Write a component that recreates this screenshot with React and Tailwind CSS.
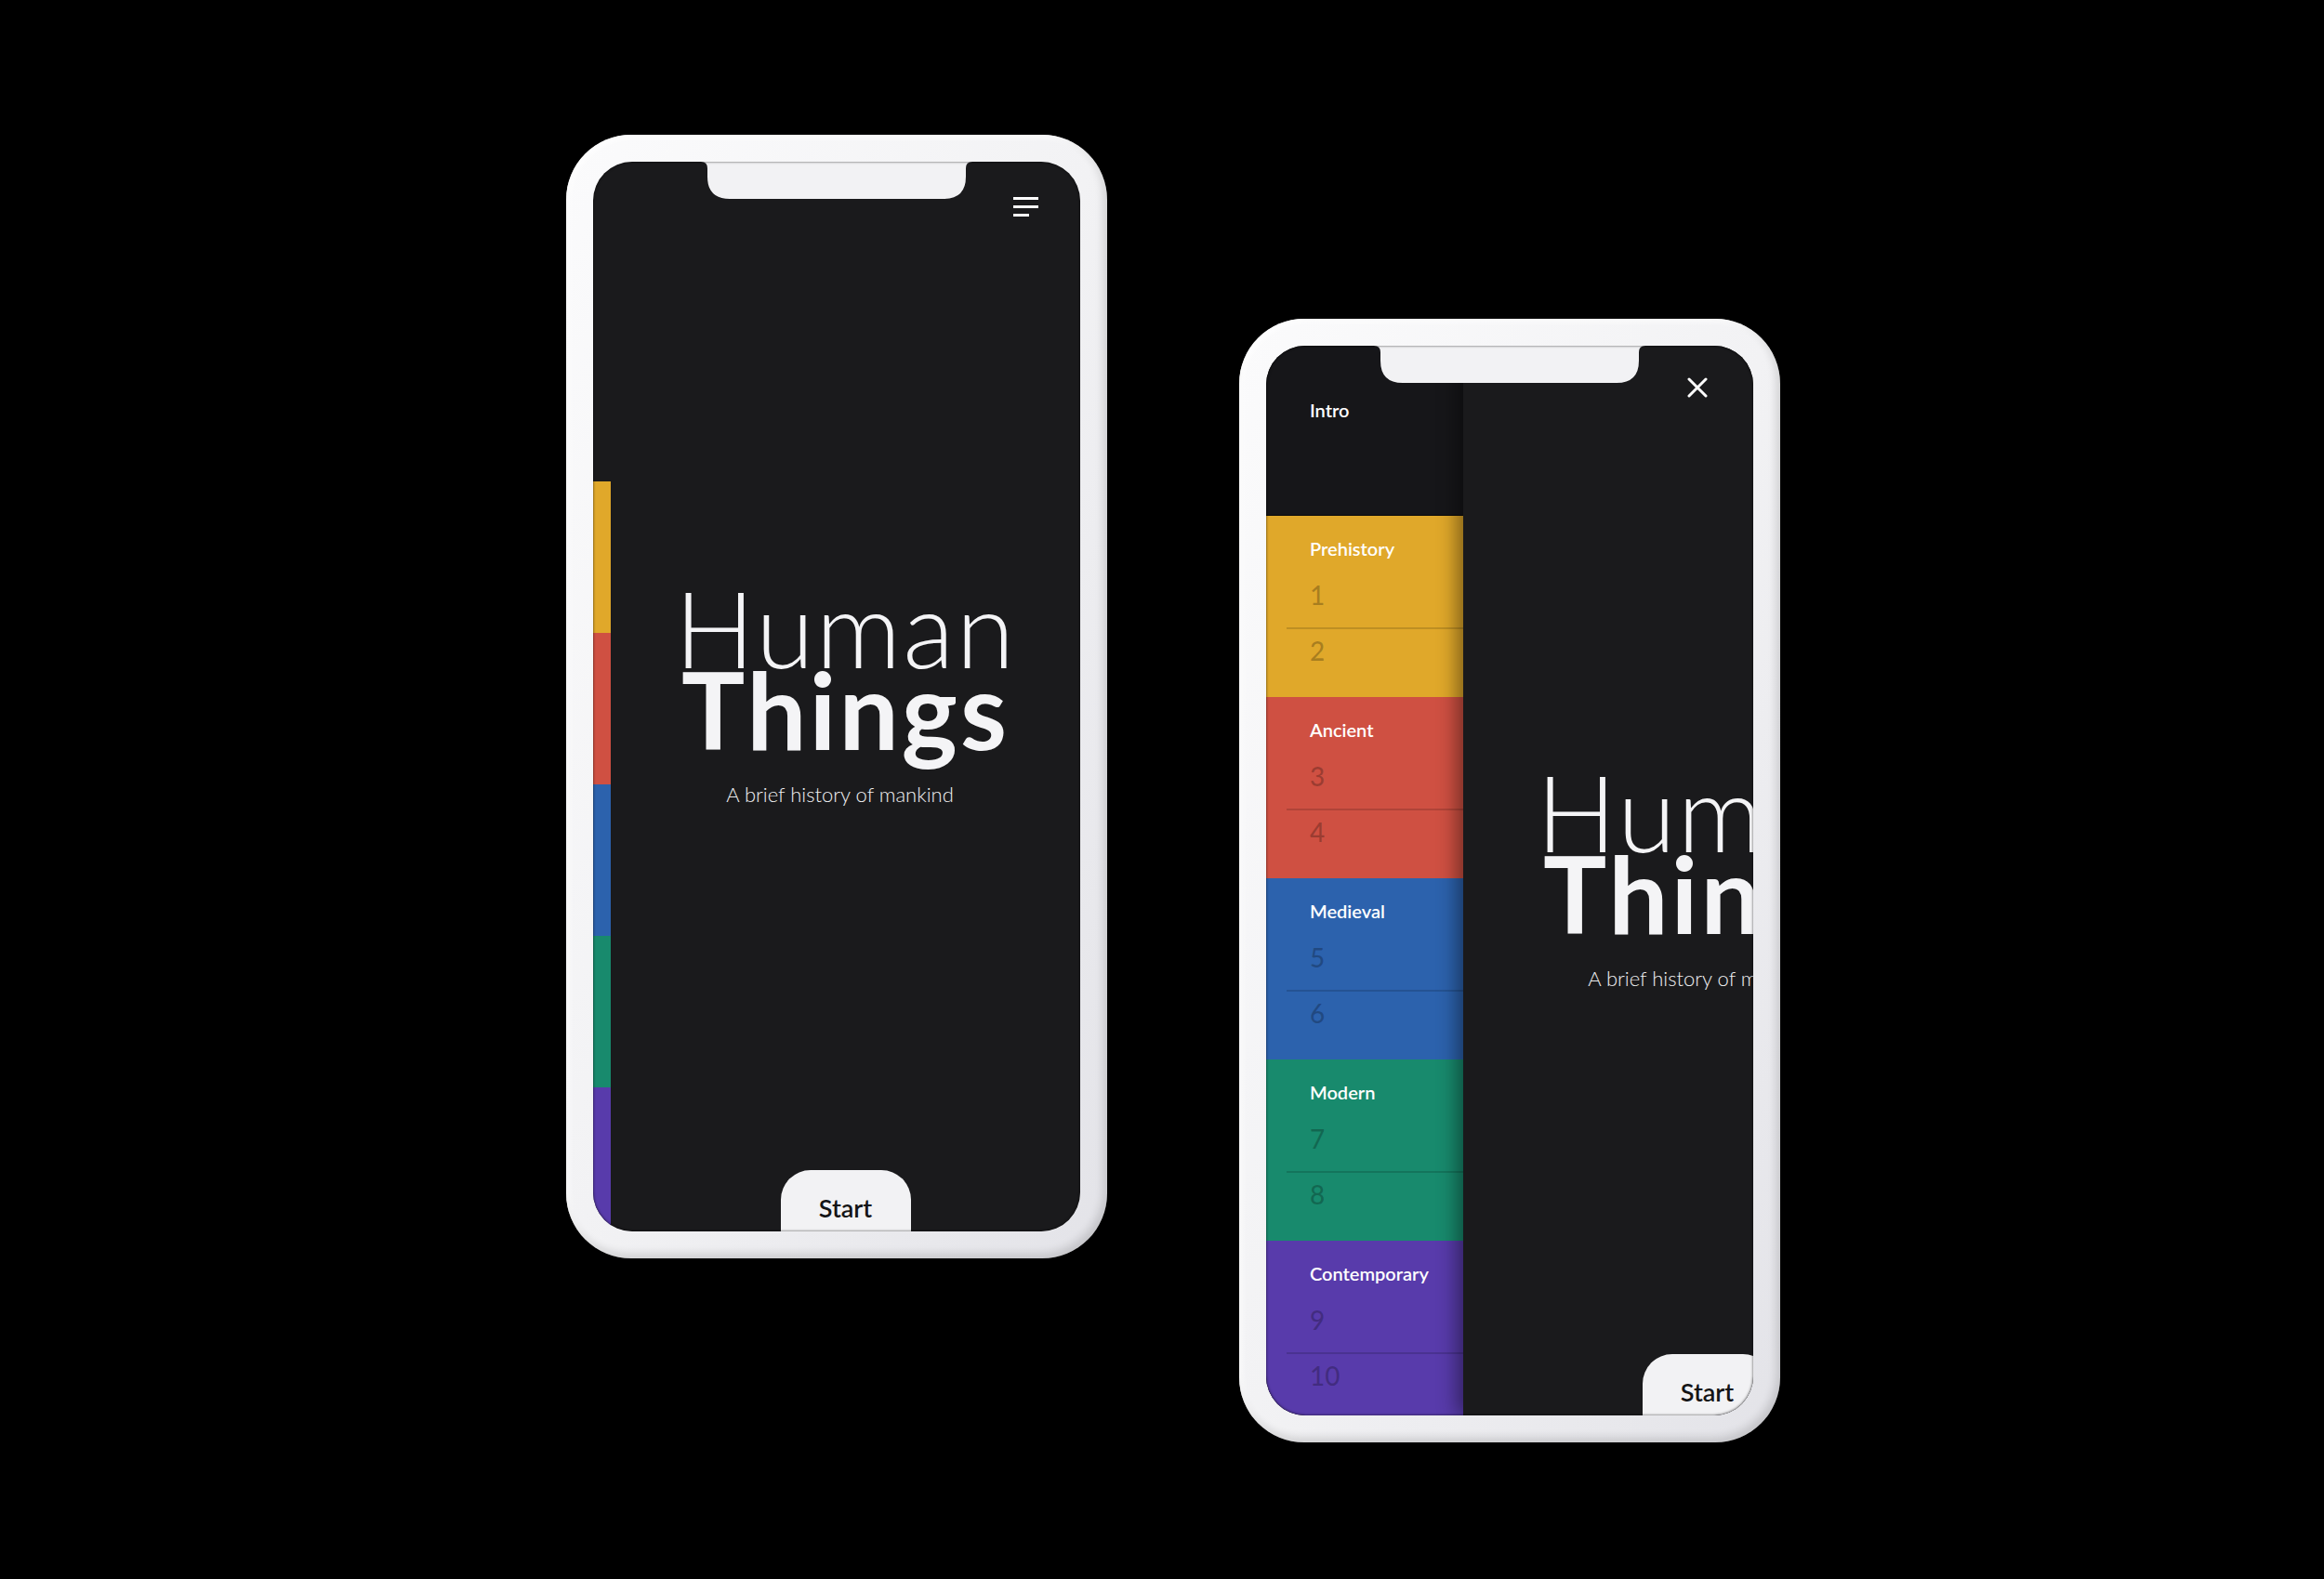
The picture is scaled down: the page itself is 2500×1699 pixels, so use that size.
import React from "react";

const eras = [
  { name: "Prehistory", color: "bg-[#e0a82a]", chapters: [1, 2] },
  { name: "Ancient", color: "bg-[#cf5042]", chapters: [3, 4] },
  { name: "Medieval", color: "bg-[#2c62ad]", chapters: [5, 6] },
  { name: "Modern", color: "bg-[#188a6d]", chapters: [7, 8] },
  { name: "Contemporary", color: "bg-[#583bab]", chapters: [9, 10] },
];

// notch cut-out at the top of the screen
const Notch = () => (
  <svg
    className="pointer-events-none absolute left-[116px] top-0 z-20"
    width="292"
    height="40"
    viewBox="0 0 292 40"
  >
    <path
      d="M0 0 H292 Q285 0 285 7 V16 Q285 40 261 40 H31 Q7 40 7 16 V7 Q7 0 0 0 Z"
      fill="#f2f2f4"
    />
  </svg>
);

const Phone = ({ className, children }) => (
  <div
    className={`relative h-[1209px] w-[582px] shrink-0 rounded-[70px] bg-gradient-to-br from-[#fbfbfc] via-[#f2f2f4] to-[#e3e3e8] p-[29px] shadow-[inset_-4px_-5px_10px_rgba(0,0,0,0.14),inset_3px_3px_6px_rgba(255,255,255,0.9)] ${className}`}
  >
    <div className="relative h-full w-full overflow-hidden rounded-[42px] bg-[#1a1a1c]">
      {children}
      <Notch />
      <div className="pointer-events-none absolute inset-0 z-30 rounded-[42px] shadow-[inset_0_0_3px_rgba(0,0,0,0.7)]" />
    </div>
  </div>
);

// title + subtitle + start tab, centred in whatever column it gets
const HomeContent = () => (
  <div className="flex h-full w-[505px] shrink-0 flex-col items-center pt-[66px]">
    <div className="flex flex-1 flex-col items-center justify-center text-[#f4f4f6]">
      <h1 className="text-[114px] font-light leading-[88px] tracking-[2px]">Human</h1>
      <h2 className="text-[114px] font-bold leading-[88px] tracking-[3px]">Things</h2>
      <p className="mt-[34px] pr-[12px] text-[22px] font-light leading-[28px] text-[#f0f0f2]">
        A brief history of mankind
      </p>
    </div>
    <button className="h-[66px] w-[140px] shrink-0 rounded-t-[32px] bg-[#f2f2f4] pt-[16px] text-[27px] font-semibold leading-[32px] text-[#141416]">
      Start
    </button>
  </div>
);

const Hamburger = () => (
  <div className="absolute right-[45px] top-[38px] z-10 flex w-[27px] flex-col gap-[6px]">
    <span className="h-[3px] w-[27px] bg-white" />
    <span className="h-[3px] w-[27px] bg-white" />
    <span className="h-[3px] w-[17px] bg-white" />
  </div>
);

const CloseIcon = () => (
  <svg
    className="absolute right-[49px] top-[34px] z-10"
    width="22"
    height="22"
    viewBox="0 0 22 22"
    fill="none"
    stroke="white"
    strokeWidth="3"
    strokeLinecap="round"
  >
    <path d="M2 2 L20 20 M20 2 L2 20" />
  </svg>
);

const HomeScreen = () => (
  <div className="flex h-full">
    <div className="flex w-[19px] shrink-0 flex-col pt-[344px]">
      <div className="h-[163px] bg-[#e0a82a]" />
      <div className="h-[163px] bg-[#cf5042]" />
      <div className="h-[163px] bg-[#2c62ad]" />
      <div className="h-[163px] bg-[#188a6d]" />
      <div className="flex-1 bg-[#583bab]" />
    </div>
    <HomeContent />
    <Hamburger />
  </div>
);

const EraSection = ({ era }) => (
  <div className={`flex h-[195px] shrink-0 flex-col pt-[23px] ${era.color}`}>
    <div className="pl-[47px] text-[20px] font-semibold leading-[24px] text-white">{era.name}</div>
    <div className="mt-[22px] pl-[47px] text-[28px] font-medium leading-[32px] text-black/25">
      {era.chapters[0]}
    </div>
    <div className="ml-[22px] mt-[19px] h-[2px] bg-black/15" />
    <div className="mt-[7px] pl-[47px] text-[28px] font-medium leading-[32px] text-black/25">
      {era.chapters[1]}
    </div>
  </div>
);

const MenuScreen = () => (
  <div className="flex h-full">
    <div className="flex w-[212px] shrink-0 flex-col bg-[#161619]">
      <div className="h-[183px] shrink-0 border-b border-black/60 pl-[47px] pt-[57px] text-[20px] font-semibold leading-[24px] text-white">
        Intro
      </div>
      {eras.map((era) => (
        <EraSection key={era.name} era={era} />
      ))}
    </div>
    <div className="relative z-10 flex h-full w-[515px] shrink-0 bg-[#1a1a1c] pl-[10px] shadow-[-6px_0_20px_rgba(0,0,0,0.45)]">
      <HomeContent />
    </div>
    <CloseIcon />
  </div>
);

export default function App() {
  return (
    <div className="flex h-[1699px] w-[2500px] items-start gap-[142px] overflow-hidden bg-black pl-[609px] font-['Lato',sans-serif]">
      <Phone className="mt-[145px]">
        <HomeScreen />
      </Phone>
      <Phone className="mt-[343px]">
        <MenuScreen />
      </Phone>
    </div>
  );
}
